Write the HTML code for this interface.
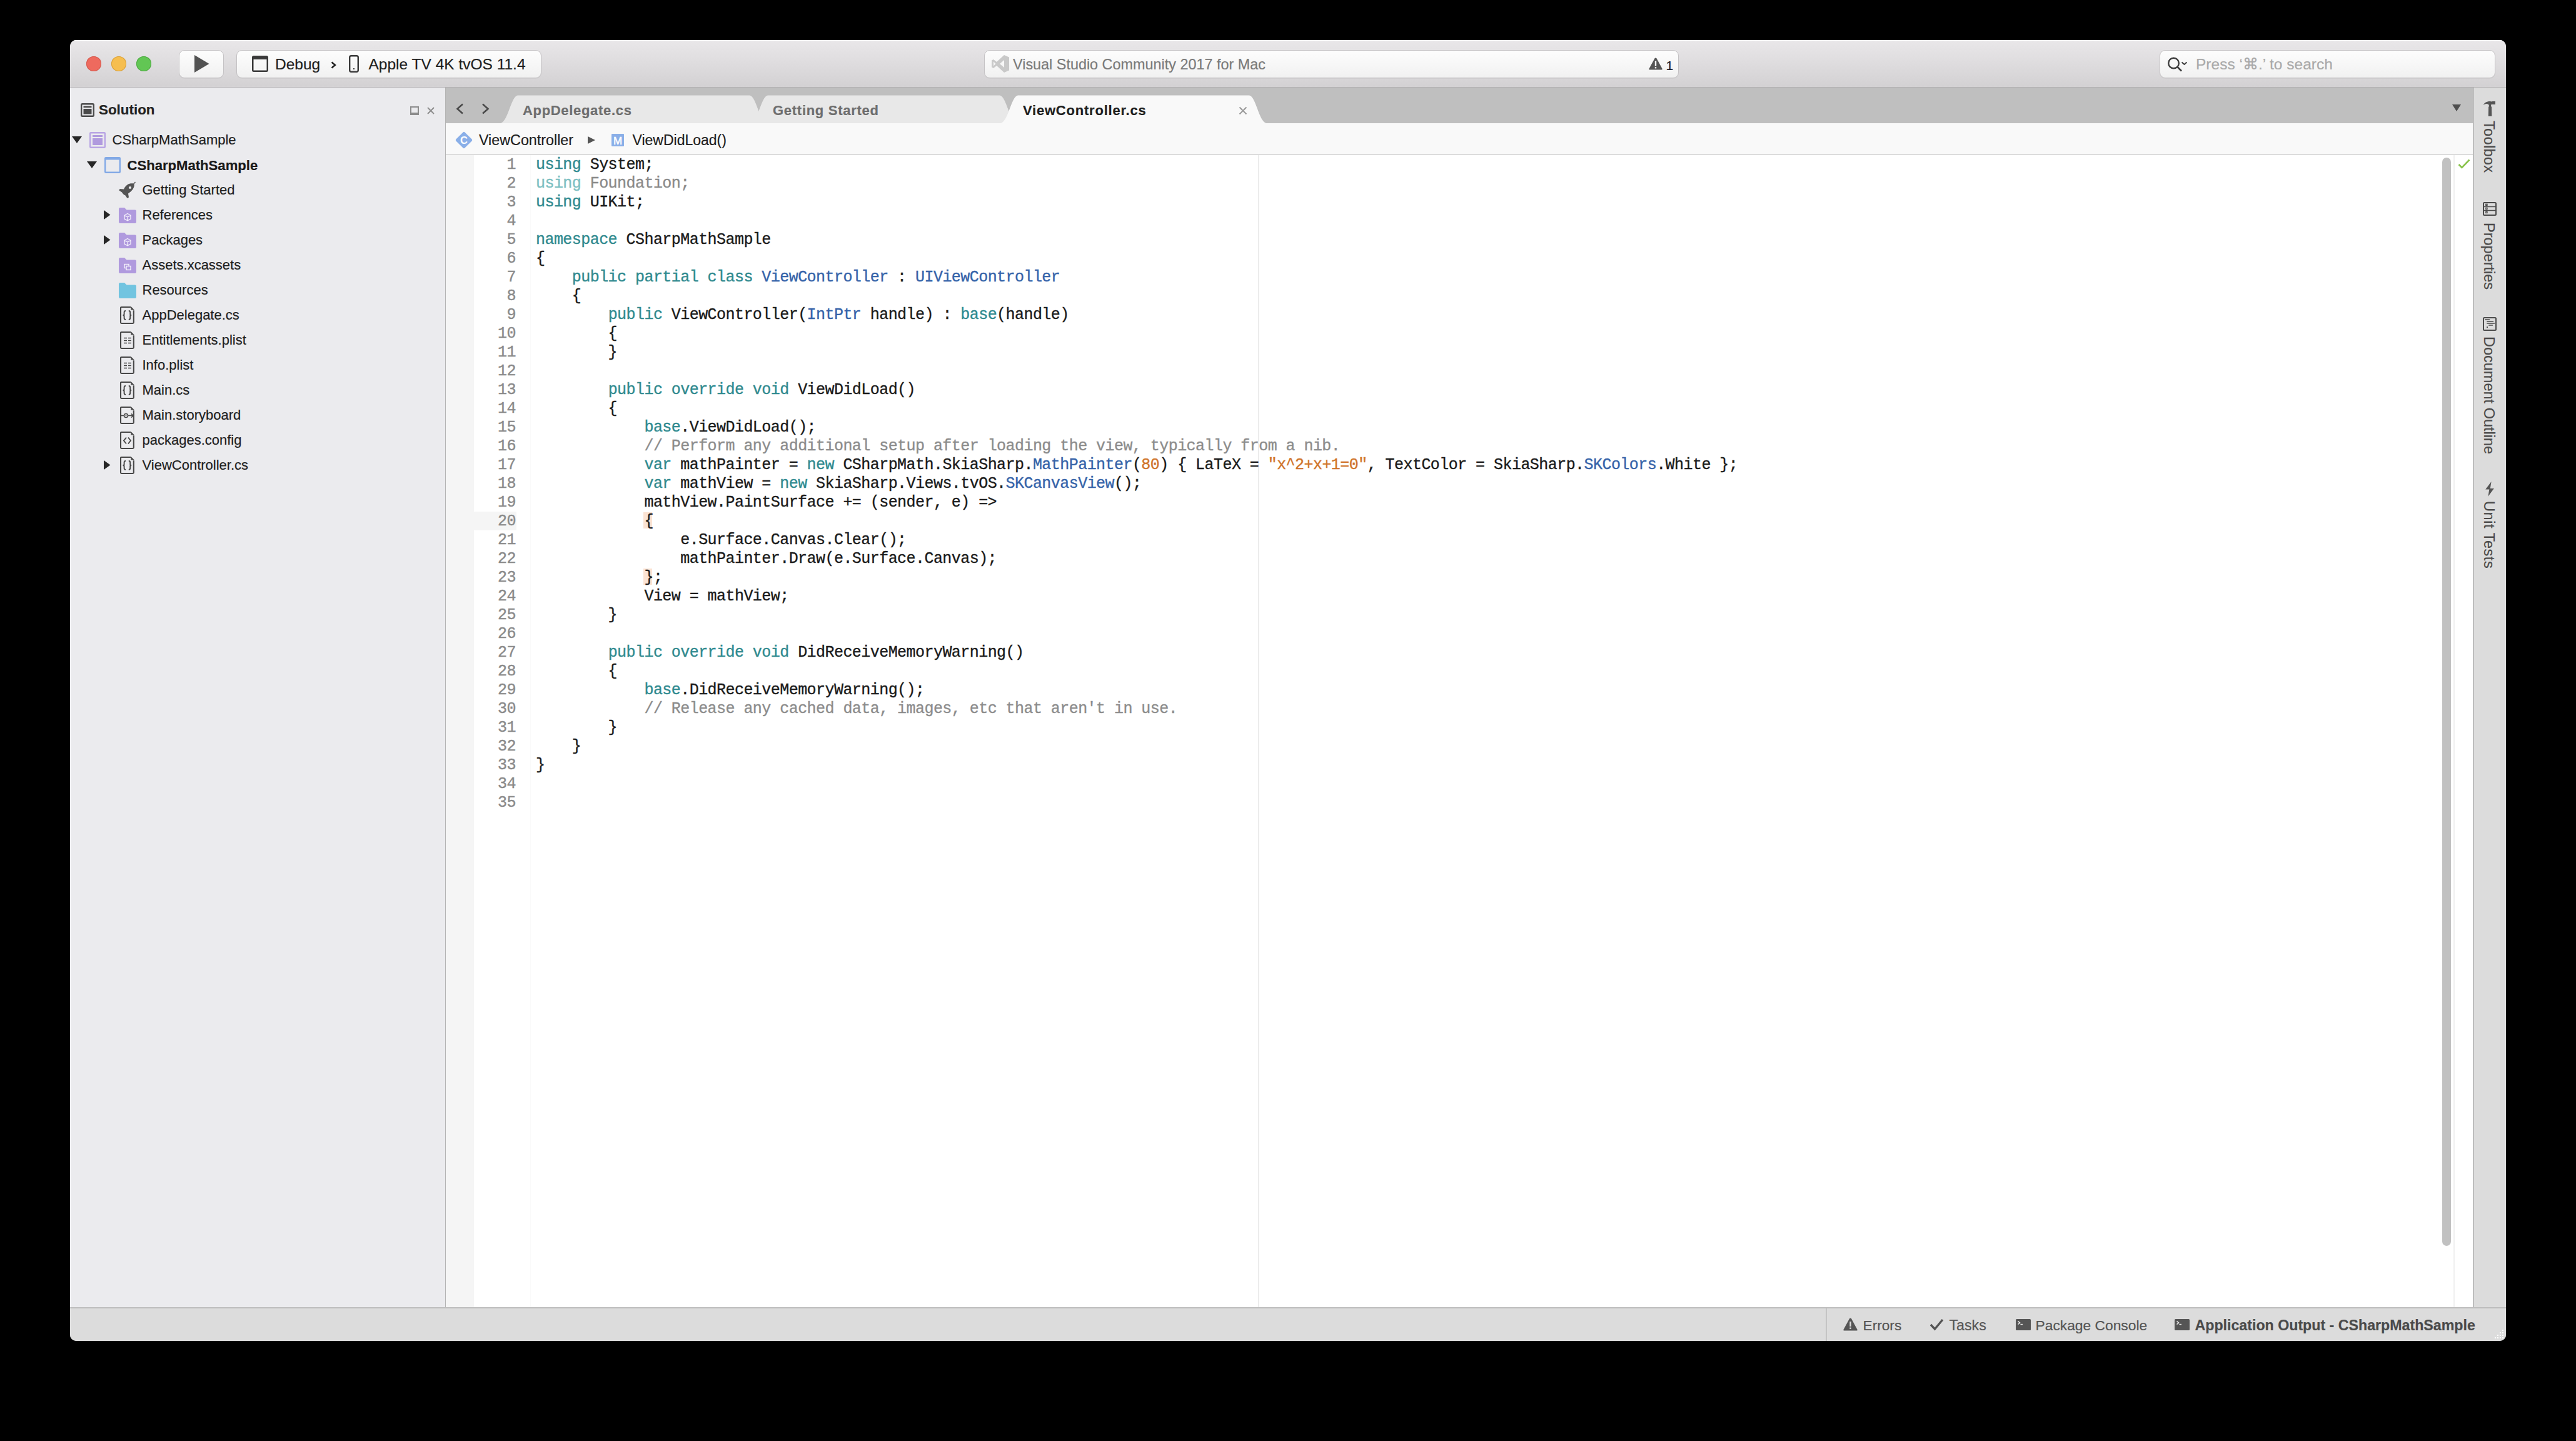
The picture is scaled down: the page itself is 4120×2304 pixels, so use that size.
<!DOCTYPE html>
<html><head><meta charset="utf-8">
<style>
html,body{margin:0;padding:0}
body{width:4120px;height:2304px;background:#000;position:relative;overflow:hidden;font-family:"Liberation Sans",sans-serif}
.a{position:absolute}
#win{position:absolute;left:112px;top:64px;width:3896px;height:2080px;border-radius:10px;overflow:hidden;background:#ececec}
#in{position:absolute;left:-112px;top:-64px;width:4120px;height:2304px}
#toolbar{left:112px;top:64px;width:3896px;height:75px;background:linear-gradient(#e9e7e9,#d3d1d3);border-bottom:1px solid #b1afb1;box-shadow:inset 0 1px 0 #f7f7f7}
.btn{background:linear-gradient(#fdfdfd,#f1f1f1);border:1.5px solid #c4c2c4;border-radius:9px;box-sizing:border-box;box-shadow:0 1px 0 rgba(0,0,0,0.04)}
.tl{width:24px;height:24px;border-radius:50%;box-sizing:border-box}
#side{left:112px;top:140px;width:600px;height:1950px;background:#ebebee}
#sideb{left:712px;top:140px;width:2px;height:1950px;background:#b4b4b4}
.row{position:absolute;font-size:22px;color:#1e1e1e;white-space:pre;line-height:26px}
#tabbar{left:713px;top:140px;width:3242px;height:57px;background:#bfbfbf}
#crumb{left:713px;top:197px;width:3242px;height:49px;background:#f9f9f9;border-bottom:2px solid #dcdcdc}
#gut{left:713px;top:248px;width:45px;height:1842px;background:#f5f5f5}
#code{left:758px;top:248px;width:3197px;height:1842px;background:#fff}
#rpanel{left:3955px;top:140px;width:53px;height:1950px;background:#dcdcdc;border-left:2px solid #bdbdbd;box-sizing:border-box}
#status{left:112px;top:2090px;width:3896px;height:54px;background:#dcdcdc;border-top:2px solid #bdbdbd;box-sizing:border-box}
.ln{position:absolute;left:758px;width:67px;text-align:right;font-family:"Liberation Mono",monospace;font-size:25px;letter-spacing:-0.6px;color:#8a8a8a;white-space:pre}
.cl{position:absolute;left:857px;font-family:"Liberation Mono",monospace;font-size:25px;letter-spacing:-0.6px;color:#1a1a1a;white-space:pre}
.lnum{z-index:2;-webkit-text-stroke:0.35px currentColor;width:67px;text-align:right;font-family:"Liberation Mono",monospace;font-size:25px;letter-spacing:-0.55px;line-height:30px;color:#8a8a8a;white-space:pre}
.code{z-index:2;-webkit-text-stroke:0.35px currentColor;font-family:"Liberation Mono",monospace;font-size:25px;letter-spacing:-0.55px;line-height:30px;color:#1a1a1a;white-space:pre}
.uk{color:#7cc0c2}.ug{color:#8a8a8a}.hl{}
.k{color:#2f8a8f}.t{color:#3563a9}.s{color:#d0742a}.c{color:#8c8c8c}
</style></head><body>
<div id="win"><div id="in">
<div id="toolbar" class="a"></div>
<div id="side" class="a"></div>
<div id="sideb" class="a"></div>
<div id="tabbar" class="a"></div>
<div id="crumb" class="a"></div>
<div id="gut" class="a"></div>
<div id="code" class="a"></div>
<div id="rpanel" class="a"></div>
<div id="status" class="a"></div>
<!--CODE-->
<div class="a lnum" style="left:758px;top:249.2px">1
2
3
4
5
6
7
8
9
10
11
12
13
14
15
16
17
18
19
20
21
22
23
24
25
26
27
28
29
30
31
32
33
34
35
</div>
<div class="a code" style="left:857px;top:249.2px"><span class="k">using</span> System;
<span class="uk">using</span><span class="ug"> Foundation;</span>
<span class="k">using</span> UIKit;

<span class="k">namespace</span> CSharpMathSample
{
    <span class="k">public partial class</span> <span class="t">ViewController</span> : <span class="t">UIViewController</span>
    {
        <span class="k">public</span> ViewController(<span class="t">IntPtr</span> handle) : <span class="k">base</span>(handle)
        {
        }

        <span class="k">public override void</span> ViewDidLoad()
        {
            <span class="k">base</span>.ViewDidLoad();
            <span class="c">// Perform any additional setup after loading the view, typically from a nib.</span>
            <span class="k">var</span> mathPainter = <span class="k">new</span> CSharpMath.SkiaSharp.<span class="t">MathPainter</span>(<span class="s">80</span>) { LaTeX = <span class="s">"x^2+x+1=0"</span>, TextColor = SkiaSharp.<span class="t">SKColors</span>.White };
            <span class="k">var</span> mathView = <span class="k">new</span> SkiaSharp.Views.tvOS.<span class="t">SKCanvasView</span>();
            mathView.PaintSurface += (sender, e) =&gt;
            <span class="hl">{</span>
                e.Surface.Canvas.Clear();
                mathPainter.Draw(e.Surface.Canvas);
            <span class="hl">}</span>;
            View = mathView;
        }

        <span class="k">public override void</span> DidReceiveMemoryWarning()
        {
            <span class="k">base</span>.DidReceiveMemoryWarning();
            <span class="c">// Release any cached data, images, etc that aren't in use.</span>
        }
    }
}


</div>
<!--/CODE-->
<!--CONTENT-->
<div class="a" style="left:138px;top:90px;width:24px;height:24px;border-radius:50%;background:#ee6a5e;box-shadow:inset 0 0 0 1px #d35a4f"></div>
<div class="a" style="left:178px;top:90px;width:24px;height:24px;border-radius:50%;background:#f6be4f;box-shadow:inset 0 0 0 1px #d9a13c"></div>
<div class="a" style="left:218px;top:90px;width:24px;height:24px;border-radius:50%;background:#62c654;box-shadow:inset 0 0 0 1px #4ea942"></div>
<div class="a btn" style="left:286px;top:80px;width:72px;height:45px"></div>
<svg class="a" style="left:311px;top:88px" width="24" height="28" viewBox="0 0 24 28"><path d="M0 0 L23.5 14 L0 28 Z" fill="#525252"/></svg>
<div class="a btn" style="left:378px;top:80px;width:488px;height:45px"></div>
<svg class="a" style="left:403px;top:89px" width="26" height="26" viewBox="0 0 26 26"><rect x="1.25" y="1.25" width="23.5" height="23.5" rx="1.5" fill="none" stroke="#3a3a3a" stroke-width="2.5"/><rect x="1" y="1" width="24" height="5" fill="#3a3a3a"/></svg>
<div class="a" style="left:440.0px;top:90.76px;font-size:24.50px;line-height:1;color:#1e1e1e;font-family:'Liberation Sans',sans-serif;white-space:pre;-webkit-text-stroke:0.2px currentColor;">Debug</div>
<svg class="a" style="left:529px;top:98px" width="9" height="12" viewBox="0 0 9 12"><path d="M1.5 1.5 L7 6 L1.5 10.5" fill="none" stroke="#1e1e1e" stroke-width="2.4"/></svg>
<svg class="a" style="left:558px;top:88px" width="16" height="28" viewBox="0 0 16 28"><rect x="1.2" y="1.2" width="13.6" height="25.6" rx="2.5" fill="none" stroke="#3a3a3a" stroke-width="2.4"/><rect x="7" y="21" width="2" height="2" fill="#3a3a3a"/></svg>
<div class="a" style="left:589.5px;top:90.76px;font-size:24.50px;line-height:1;color:#1e1e1e;font-family:'Liberation Sans',sans-serif;white-space:pre;-webkit-text-stroke:0.2px currentColor;">Apple TV 4K tvOS 11.4</div>
<div class="a btn" style="left:1574px;top:80px;width:1111px;height:45px"></div>
<svg class="a" style="left:1586px;top:88px" width="28" height="28" viewBox="0 0 28 28"><path d="M20 0 L28 3.5 L28 24.5 L20 28 L8 17 L3 21 L0 19.5 L0 8.5 L3 7 L8 11 Z M20 8 L13 14 L20 20 Z M3 10.5 L3 17.5 L6.5 14 Z" fill="#c9c9c9" fill-rule="evenodd"/></svg>
<div class="a" style="left:1620.0px;top:92.19px;font-size:23.40px;line-height:1;color:#7a7a7a;font-family:'Liberation Sans',sans-serif;white-space:pre;-webkit-text-stroke:0.2px currentColor;">Visual Studio Community 2017 for Mac</div>
<svg class="a" style="left:2637px;top:92px" width="22" height="20" viewBox="0 0 22 20"><path d="M11 0.5 Q12 0.5 12.6 1.5 L21.6 18 Q22 19.5 20.5 19.5 L1.5 19.5 Q0 19.5 0.4 18 L9.4 1.5 Q10 0.5 11 0.5 Z" fill="#555"/><rect x="9.8" y="5.5" width="2.4" height="8" fill="#fff"/><rect x="9.8" y="15" width="2.4" height="2.4" fill="#fff"/></svg>
<div class="a" style="left:2664.5px;top:94.22px;font-size:21.00px;line-height:1;color:#1a1a2a;font-family:'Liberation Sans',sans-serif;white-space:pre;-webkit-text-stroke:0.2px currentColor;">1</div>
<div class="a btn" style="left:3454px;top:80px;width:537px;height:45px"></div>
<svg class="a" style="left:3466px;top:91px" width="36" height="26" viewBox="0 0 36 26"><circle cx="10.5" cy="10" r="8.3" fill="none" stroke="#3c3c3c" stroke-width="2.4"/><path d="M16.5 16 L23 22.5" stroke="#3c3c3c" stroke-width="2.6"/><path d="M23.5 8.5 L27.5 12 L31.5 8.5" fill="none" stroke="#3c3c3c" stroke-width="2"/></svg>
<div class="a" style="left:3512.0px;top:91.26px;font-size:24.50px;line-height:1;color:#a9a9a9;font-family:'Liberation Sans',sans-serif;white-space:pre;-webkit-text-stroke:0.2px currentColor;">Press ‘⌘.’ to search</div>
<svg class="a" style="left:129px;top:165px" width="22" height="22" viewBox="0 0 22 22"><rect x="1.2" y="1.2" width="19.6" height="19.6" rx="1.5" fill="none" stroke="#4a4a4a" stroke-width="2.4"/><rect x="4.5" y="4.5" width="13" height="2.6" fill="#4a4a4a"/><rect x="4.5" y="9" width="13" height="8.5" fill="#4a4a4a"/></svg>
<div class="a" style="left:158.0px;top:165.24px;font-size:22.40px;line-height:1;color:#222;font-weight:bold;font-family:'Liberation Sans',sans-serif;white-space:pre;-webkit-text-stroke:0.2px currentColor;">Solution</div>
<svg class="a" style="left:656px;top:170px" width="14" height="14" viewBox="0 0 14 14"><rect x="1" y="1" width="12" height="12" fill="none" stroke="#8c8c8c" stroke-width="2"/><rect x="1" y="10" width="12" height="3" fill="#8c8c8c"/></svg>
<svg class="a" style="left:683px;top:171px" width="12" height="12" viewBox="0 0 12 12"><path d="M1 1 L11 11 M11 1 L1 11" stroke="#8c8c8c" stroke-width="1.8"/></svg>
<svg class="a" style="left:115px;top:218px" width="16" height="12" viewBox="0 0 16 12"><path d="M0 0 L16 0 L8 11 Z" fill="#262626"/></svg>
<svg class="a" style="left:143px;top:211px" width="26" height="26" viewBox="0 0 26 26"><rect x="1.2" y="1.2" width="23.6" height="23.6" rx="1" fill="none" stroke="#b9a5e4" stroke-width="2.4"/><rect x="5" y="5" width="16" height="3" fill="#b09ade"/><rect x="5" y="10" width="16" height="11" fill="#b09ade"/></svg>
<div class="a" style="left:179.5px;top:213.38px;font-size:22.00px;line-height:1;color:#1e1e1e;font-family:'Liberation Sans',sans-serif;white-space:pre;-webkit-text-stroke:0.2px currentColor;">CSharpMathSample</div>
<svg class="a" style="left:139px;top:258px" width="16" height="12" viewBox="0 0 16 12"><path d="M0 0 L16 0 L8 11 Z" fill="#262626"/></svg>
<svg class="a" style="left:167px;top:251px" width="26" height="26" viewBox="0 0 26 26"><rect x="1.2" y="1.2" width="23.6" height="23.6" rx="1" fill="none" stroke="#82a9e6" stroke-width="2.4"/><rect x="1" y="1" width="24" height="3.5" fill="#82a9e6"/></svg>
<div class="a" style="left:203.5px;top:253.79px;font-size:22.10px;line-height:1;color:#1a1a1a;font-weight:bold;font-family:'Liberation Sans',sans-serif;white-space:pre;-webkit-text-stroke:0.2px currentColor;">CSharpMathSample</div>
<svg class="a" style="left:185px;top:285px" width="36" height="36" viewBox="0 0 36 36"><path d="M10 22.5 L5.5 19.5 L6.5 17 L13 17.5 C15 13 19 9 24 8.3 C26 8 28 8.2 29.3 8.6 C30.2 11 29.6 14.5 27.5 17.5 C25.5 20.5 22.5 22.5 20 24.5 L21 30.5 L18.5 32 L15.5 27.5 C13.5 27 11.5 25 10 22.5 Z" fill="#555"/><path d="M28.8 9 L31.5 6" stroke="#555" stroke-width="1.3"/><circle cx="23" cy="15" r="2.1" fill="#ebebee"/></svg>
<div class="a" style="left:227.5px;top:293.38px;font-size:22.00px;line-height:1;color:#1e1e1e;font-family:'Liberation Sans',sans-serif;white-space:pre;-webkit-text-stroke:0.2px currentColor;">Getting Started</div>
<svg class="a" style="left:166px;top:336px" width="11" height="15" viewBox="0 0 11 15"><path d="M0 0 L10.5 7.5 L0 15 Z" fill="#262626"/></svg>
<svg class="a" style="left:190px;top:332px" width="28" height="25" viewBox="0 0 28 25"><path d="M0 2 Q0 0 2 0 L9 0 L12.5 3.5 L26 3.5 Q28 3.5 28 5.5 L28 23 Q28 25 26 25 L2 25 Q0 25 0 23 Z" fill="#b09ade"/><path d="M14 9.5 L19 12.3 L19 18 L14 20.8 L9 18 L9 12.3 Z M9 12.3 L14 15.1 L19 12.3 M14 15.1 L14 20.8" fill="none" stroke="#f4f0fb" stroke-width="1.3"/></svg>
<div class="a" style="left:227.5px;top:333.38px;font-size:22.00px;line-height:1;color:#1e1e1e;font-family:'Liberation Sans',sans-serif;white-space:pre;-webkit-text-stroke:0.2px currentColor;">References</div>
<svg class="a" style="left:166px;top:376px" width="11" height="15" viewBox="0 0 11 15"><path d="M0 0 L10.5 7.5 L0 15 Z" fill="#262626"/></svg>
<svg class="a" style="left:190px;top:372px" width="28" height="25" viewBox="0 0 28 25"><path d="M0 2 Q0 0 2 0 L9 0 L12.5 3.5 L26 3.5 Q28 3.5 28 5.5 L28 23 Q28 25 26 25 L2 25 Q0 25 0 23 Z" fill="#b09ade"/><path d="M14 9.5 L19 12.3 L19 18 L14 20.8 L9 18 L9 12.3 Z M9 12.3 L14 15.1 L19 12.3 M14 15.1 L14 20.8" fill="none" stroke="#f4f0fb" stroke-width="1.3"/></svg>
<div class="a" style="left:227.5px;top:373.38px;font-size:22.00px;line-height:1;color:#1e1e1e;font-family:'Liberation Sans',sans-serif;white-space:pre;-webkit-text-stroke:0.2px currentColor;">Packages</div>
<svg class="a" style="left:190px;top:412px" width="28" height="25" viewBox="0 0 28 25"><path d="M0 2 Q0 0 2 0 L9 0 L12.5 3.5 L26 3.5 Q28 3.5 28 5.5 L28 23 Q28 25 26 25 L2 25 Q0 25 0 23 Z" fill="#b09ade"/><rect x="9" y="10.5" width="7" height="6" fill="none" stroke="#f4f0fb" stroke-width="1.4"/><rect x="12" y="13.5" width="7" height="6" fill="#b09ade" stroke="#f4f0fb" stroke-width="1.4"/></svg>
<div class="a" style="left:227.5px;top:413.38px;font-size:22.00px;line-height:1;color:#1e1e1e;font-family:'Liberation Sans',sans-serif;white-space:pre;-webkit-text-stroke:0.2px currentColor;">Assets.xcassets</div>
<svg class="a" style="left:190px;top:452px" width="28" height="25" viewBox="0 0 28 25"><path d="M0 2 Q0 0 2 0 L9 0 L12.5 3.5 L26 3.5 Q28 3.5 28 5.5 L28 23 Q28 25 26 25 L2 25 Q0 25 0 23 Z" fill="#71c4e0"/></svg>
<div class="a" style="left:227.5px;top:453.38px;font-size:22.00px;line-height:1;color:#1e1e1e;font-family:'Liberation Sans',sans-serif;white-space:pre;-webkit-text-stroke:0.2px currentColor;">Resources</div>
<svg class="a" style="left:190.5px;top:489px" width="26" height="30" viewBox="0 0 26 30"><path d="M18.2 2 L3.4 2 Q2 2 2 3.4 L2 26.6 Q2 28 3.4 28 L21.4 28 Q22.8 28 22.8 26.6 L22.8 7.2" fill="none" stroke="#474747" stroke-width="2.1"/><path d="M18.4 1 L24 6.6 L18.4 6.6 Z" fill="#474747"/><path d="M10 8 Q7.6 8 7.6 10.4 L7.6 13.6 Q7.6 15 5.6 15 Q7.6 15 7.6 16.4 L7.6 19.6 Q7.6 22 10 22 M14.8 8 Q17.2 8 17.2 10.4 L17.2 13.6 Q17.2 15 19.2 15 Q17.2 15 17.2 16.4 L17.2 19.6 Q17.2 22 14.8 22" fill="none" stroke="#474747" stroke-width="1.9"/></svg>
<div class="a" style="left:227.5px;top:493.38px;font-size:22.00px;line-height:1;color:#1e1e1e;font-family:'Liberation Sans',sans-serif;white-space:pre;-webkit-text-stroke:0.2px currentColor;">AppDelegate.cs</div>
<svg class="a" style="left:190.5px;top:529px" width="26" height="30" viewBox="0 0 26 30"><path d="M18.2 2 L3.4 2 Q2 2 2 3.4 L2 26.6 Q2 28 3.4 28 L21.4 28 Q22.8 28 22.8 26.6 L22.8 7.2" fill="none" stroke="#474747" stroke-width="2.1"/><path d="M18.4 1 L24 6.6 L18.4 6.6 Z" fill="#474747"/><path d="M7 11.5 L12 11.5 M14 11.5 L19 11.5 M7 15.5 L12 15.5 M14 15.5 L19 15.5 M7 19.5 L12 19.5 M14 19.5 L19 19.5" stroke="#474747" stroke-width="1.7"/></svg>
<div class="a" style="left:227.5px;top:533.38px;font-size:22.00px;line-height:1;color:#1e1e1e;font-family:'Liberation Sans',sans-serif;white-space:pre;-webkit-text-stroke:0.2px currentColor;">Entitlements.plist</div>
<svg class="a" style="left:190.5px;top:569px" width="26" height="30" viewBox="0 0 26 30"><path d="M18.2 2 L3.4 2 Q2 2 2 3.4 L2 26.6 Q2 28 3.4 28 L21.4 28 Q22.8 28 22.8 26.6 L22.8 7.2" fill="none" stroke="#474747" stroke-width="2.1"/><path d="M18.4 1 L24 6.6 L18.4 6.6 Z" fill="#474747"/><path d="M7 11.5 L12 11.5 M14 11.5 L19 11.5 M7 15.5 L12 15.5 M14 15.5 L19 15.5 M7 19.5 L12 19.5 M14 19.5 L19 19.5" stroke="#474747" stroke-width="1.7"/></svg>
<div class="a" style="left:227.5px;top:573.38px;font-size:22.00px;line-height:1;color:#1e1e1e;font-family:'Liberation Sans',sans-serif;white-space:pre;-webkit-text-stroke:0.2px currentColor;">Info.plist</div>
<svg class="a" style="left:190.5px;top:609px" width="26" height="30" viewBox="0 0 26 30"><path d="M18.2 2 L3.4 2 Q2 2 2 3.4 L2 26.6 Q2 28 3.4 28 L21.4 28 Q22.8 28 22.8 26.6 L22.8 7.2" fill="none" stroke="#474747" stroke-width="2.1"/><path d="M18.4 1 L24 6.6 L18.4 6.6 Z" fill="#474747"/><path d="M10 8 Q7.6 8 7.6 10.4 L7.6 13.6 Q7.6 15 5.6 15 Q7.6 15 7.6 16.4 L7.6 19.6 Q7.6 22 10 22 M14.8 8 Q17.2 8 17.2 10.4 L17.2 13.6 Q17.2 15 19.2 15 Q17.2 15 17.2 16.4 L17.2 19.6 Q17.2 22 14.8 22" fill="none" stroke="#474747" stroke-width="1.9"/></svg>
<div class="a" style="left:227.5px;top:613.38px;font-size:22.00px;line-height:1;color:#1e1e1e;font-family:'Liberation Sans',sans-serif;white-space:pre;-webkit-text-stroke:0.2px currentColor;">Main.cs</div>
<svg class="a" style="left:190.5px;top:649px" width="26" height="30" viewBox="0 0 26 30"><path d="M18.2 2 L3.4 2 Q2 2 2 3.4 L2 26.6 Q2 28 3.4 28 L21.4 28 Q22.8 28 22.8 26.6 L22.8 7.2" fill="none" stroke="#474747" stroke-width="2.1"/><path d="M18.4 1 L24 6.6 L18.4 6.6 Z" fill="#474747"/><path d="M2 15.5 L7 15.5 M14 15.5 L22 15.5 M19 12.5 L22 15.5 L19 18.5" fill="none" stroke="#474747" stroke-width="1.6"/><circle cx="10.5" cy="15.5" r="3" fill="none" stroke="#474747" stroke-width="1.6"/><circle cx="10.5" cy="15.5" r="0.9" fill="#474747"/></svg>
<div class="a" style="left:227.5px;top:653.38px;font-size:22.00px;line-height:1;color:#1e1e1e;font-family:'Liberation Sans',sans-serif;white-space:pre;-webkit-text-stroke:0.2px currentColor;">Main.storyboard</div>
<svg class="a" style="left:190.5px;top:689px" width="26" height="30" viewBox="0 0 26 30"><path d="M18.2 2 L3.4 2 Q2 2 2 3.4 L2 26.6 Q2 28 3.4 28 L21.4 28 Q22.8 28 22.8 26.6 L22.8 7.2" fill="none" stroke="#474747" stroke-width="2.1"/><path d="M18.4 1 L24 6.6 L18.4 6.6 Z" fill="#474747"/><path d="M11 10.5 L7 15.5 L11 20.5 M14 10.5 L18 15.5 L14 20.5" fill="none" stroke="#474747" stroke-width="1.9"/></svg>
<div class="a" style="left:227.5px;top:693.38px;font-size:22.00px;line-height:1;color:#1e1e1e;font-family:'Liberation Sans',sans-serif;white-space:pre;-webkit-text-stroke:0.2px currentColor;">packages.config</div>
<svg class="a" style="left:166px;top:736px" width="11" height="15" viewBox="0 0 11 15"><path d="M0 0 L10.5 7.5 L0 15 Z" fill="#262626"/></svg>
<svg class="a" style="left:190.5px;top:729px" width="26" height="30" viewBox="0 0 26 30"><path d="M18.2 2 L3.4 2 Q2 2 2 3.4 L2 26.6 Q2 28 3.4 28 L21.4 28 Q22.8 28 22.8 26.6 L22.8 7.2" fill="none" stroke="#474747" stroke-width="2.1"/><path d="M18.4 1 L24 6.6 L18.4 6.6 Z" fill="#474747"/><path d="M10 8 Q7.6 8 7.6 10.4 L7.6 13.6 Q7.6 15 5.6 15 Q7.6 15 7.6 16.4 L7.6 19.6 Q7.6 22 10 22 M14.8 8 Q17.2 8 17.2 10.4 L17.2 13.6 Q17.2 15 19.2 15 Q17.2 15 17.2 16.4 L17.2 19.6 Q17.2 22 14.8 22" fill="none" stroke="#474747" stroke-width="1.9"/></svg>
<div class="a" style="left:227.5px;top:733.38px;font-size:22.00px;line-height:1;color:#1e1e1e;font-family:'Liberation Sans',sans-serif;white-space:pre;-webkit-text-stroke:0.2px currentColor;">ViewController.cs</div>
<svg class="a" style="left:0;top:0" width="4120" height="260"><path d="M801 197 C813 193 817 154.5 828 152.5 L1199 152.5 C1210 154.5 1214 193 1226 197 Z" fill="#e8e8e8" stroke="none" stroke-width="1"/><path d="M1201 197 C1213 193 1217 154.5 1228 152.5 L1599 152.5 C1610 154.5 1614 193 1626 197 Z" fill="#e8e8e8" stroke="none" stroke-width="1"/><path d="M1601 197 C1613 193 1617 154.5 1628 152.5 L1998 152.5 C2009 154.5 2013 193 2025 197 Z" fill="#f9f9f9" stroke="none" stroke-width="1"/></svg>
<svg class="a" style="left:729px;top:165px" width="13" height="18" viewBox="0 0 13 18"><path d="M11 1.5 L2.5 9 L11 16.5" fill="none" stroke="#4a4a4a" stroke-width="2.6"/></svg>
<svg class="a" style="left:770px;top:165px" width="13" height="18" viewBox="0 0 13 18"><path d="M2 1.5 L10.5 9 L2 16.5" fill="none" stroke="#4a4a4a" stroke-width="2.6"/></svg>
<div class="a" style="left:836.0px;top:166.38px;font-size:22.00px;line-height:1;color:#6e6e6e;font-weight:bold;font-family:'Liberation Sans',sans-serif;white-space:pre;-webkit-text-stroke:0.2px currentColor;letter-spacing:0.68px">AppDelegate.cs</div>
<div class="a" style="left:1236.0px;top:166.38px;font-size:22.00px;line-height:1;color:#6e6e6e;font-weight:bold;font-family:'Liberation Sans',sans-serif;white-space:pre;-webkit-text-stroke:0.2px currentColor;letter-spacing:0.72px">Getting Started</div>
<div class="a" style="left:1636.0px;top:166.38px;font-size:22.00px;line-height:1;color:#1e1e1e;font-weight:bold;font-family:'Liberation Sans',sans-serif;white-space:pre;-webkit-text-stroke:0.2px currentColor;letter-spacing:0.78px">ViewController.cs</div>
<svg class="a" style="left:1981px;top:170px" width="14" height="14" viewBox="0 0 14 14"><path d="M1.5 1.5 L12.5 12.5 M12.5 1.5 L1.5 12.5" stroke="#9a9a9a" stroke-width="2"/></svg>
<svg class="a" style="left:3922px;top:167px" width="14" height="12" viewBox="0 0 14 12"><path d="M0 0 L14 0 L7 11 Z" fill="#4e4e4e"/></svg>
<svg class="a" style="left:728px;top:210px" width="28" height="28" viewBox="0 0 28 28"><path d="M12.6 1.4 Q14 0 15.4 1.4 L26.6 12.6 Q28 14 26.6 15.4 L15.4 26.6 Q14 28 12.6 26.6 L1.4 15.4 Q0 14 1.4 12.6 Z" fill="#8aafe8"/><text x="14" y="20" font-family="Liberation Sans" font-weight="bold" font-size="16.5" text-anchor="middle" fill="#fff">C</text></svg>
<div class="a" style="left:766.0px;top:212.88px;font-size:23.30px;line-height:1;color:#1e1e1e;font-family:'Liberation Sans',sans-serif;white-space:pre;-webkit-text-stroke:0.2px currentColor;">ViewController</div>
<svg class="a" style="left:940px;top:218px" width="12" height="12" viewBox="0 0 12 12"><path d="M0 0 L12 6 L0 12 Z" fill="#555"/></svg>
<svg class="a" style="left:978px;top:214px" width="20" height="20" viewBox="0 0 20 20"><rect width="20" height="20" rx="1" fill="#8aafe8"/><text x="10" y="16.8" font-family="Liberation Sans" font-size="17" text-anchor="middle" fill="#fff" stroke="#fff" stroke-width="0.5">M</text></svg>
<div class="a" style="left:1011.5px;top:213.13px;font-size:23.00px;line-height:1;color:#1e1e1e;font-family:'Liberation Sans',sans-serif;white-space:pre;-webkit-text-stroke:0.2px currentColor;">ViewDidLoad()</div>
<div class="a" style="left:758px;top:818px;width:68px;height:30px;background:#f5f5f5"></div>
<div class="a" style="left:1029px;top:819px;width:13.5px;height:25.5px;background:#fbe3d3"></div>
<div class="a" style="left:1029px;top:909px;width:13.5px;height:25.5px;background:#fbe3d3"></div>
<div class="a" style="left:848px;top:248px;width:1px;height:1842px;background:#fafafa"></div>
<div class="a" style="left:2012px;top:248px;width:2px;height:1842px;background:#ececec"></div>
<div class="a" style="left:3924px;top:248px;width:2px;height:1842px;background:#f0f0f0"></div>
<div class="a" style="left:3906px;top:252px;width:14px;height:1740px;border-radius:7px;background:#c1c1c1"></div>
<svg class="a" style="left:3931px;top:254px" width="20" height="16" viewBox="0 0 20 16"><path d="M1.5 9 L6.5 14 L18.5 1.5" fill="none" stroke="#88c24a" stroke-width="2.6"/></svg>
<svg class="a" style="left:3970px;top:160px" width="24" height="28" viewBox="0 0 24 28"><path d="M1.8 7.7 C4 3.5 8.5 2 12.5 2 L15.6 2.5 L16.4 2 L21 2 L21 7 L16.4 7 L15.6 6.4 L14.3 7.4 Q13.9 9 14.2 10.6 L15 10.6 L15.3 25.8 L9.8 25.8 L10.1 10.6 L10.9 10.6 Q11.1 8.6 10.3 7.2 Q6.5 4.6 1.8 7.7 Z" fill="#555"/></svg>
<div class="a" style="left:3991.5px;top:193px;font-size:23.5px;line-height:1;color:#4a4a4a;white-space:pre;letter-spacing:0.33px;-webkit-text-stroke:0.15px currentColor;transform-origin:0 0;transform:rotate(90deg)">Toolbox</div>
<svg class="a" style="left:3970px;top:322px" width="24" height="24" viewBox="0 0 24 24"><rect x="2" y="2" width="20" height="20" rx="1.5" fill="none" stroke="#4a4a4a" stroke-width="2"/><path d="M2 8.4 L22 8.4 M2 14.4 L22 14.4" stroke="#4a4a4a" stroke-width="1.5"/><rect x="5.8" y="4.3" width="2.2" height="2.2" fill="none" stroke="#4a4a4a" stroke-width="1.3"/><rect x="5.8" y="10.3" width="2.2" height="2.2" fill="none" stroke="#4a4a4a" stroke-width="1.3"/><rect x="5.8" y="16.3" width="2.2" height="2.2" fill="none" stroke="#4a4a4a" stroke-width="1.3"/></svg>
<div class="a" style="left:3991.5px;top:356px;font-size:23.5px;line-height:1;color:#4a4a4a;white-space:pre;letter-spacing:0px;-webkit-text-stroke:0.15px currentColor;transform-origin:0 0;transform:rotate(90deg)">Properties</div>
<svg class="a" style="left:3970px;top:506px" width="24" height="24" viewBox="0 0 24 24"><rect x="2" y="2" width="20" height="20" rx="1.5" fill="none" stroke="#4a4a4a" stroke-width="2"/><path d="M4.8 5 L11.5 5 M7.8 8 L17.5 8 M7.8 11 L19.5 11 M10.8 14 L16.5 14" stroke="#4a4a4a" stroke-width="1.6" stroke-linecap="round"/><rect x="7" y="16.2" width="2" height="2" fill="#4a4a4a"/></svg>
<div class="a" style="left:3991.5px;top:538px;font-size:23.5px;line-height:1;color:#4a4a4a;white-space:pre;letter-spacing:0px;-webkit-text-stroke:0.15px currentColor;transform-origin:0 0;transform:rotate(90deg)">Document Outline</div>
<svg class="a" style="left:3970px;top:766px" width="24" height="30" viewBox="0 0 24 30"><path d="M14.6 4 L5.2 16.6 L11.3 16.6 L9.4 27.7 L18.9 15 L12.8 15 Z" fill="#555"/></svg>
<div class="a" style="left:3991.5px;top:801px;font-size:23.5px;line-height:1;color:#4a4a4a;white-space:pre;letter-spacing:0.55px;-webkit-text-stroke:0.15px currentColor;transform-origin:0 0;transform:rotate(90deg)">Unit Tests</div>
<div class="a" style="left:2920px;top:2092px;width:2px;height:52px;background:#c4c4c4"></div>
<svg class="a" style="left:2948px;top:2107px" width="23" height="21" viewBox="0 0 23 21"><path d="M11.5 0.5 Q12.5 0.5 13.1 1.5 L22.6 19 Q23 20.5 21.5 20.5 L1.5 20.5 Q0 20.5 0.4 19 L9.9 1.5 Q10.5 0.5 11.5 0.5 Z" fill="#555"/><rect x="10.3" y="6" width="2.4" height="8" fill="#dcdcdc"/><rect x="10.3" y="15.5" width="2.4" height="2.4" fill="#dcdcdc"/></svg>
<div class="a" style="left:2979.5px;top:2107.98px;font-size:22.70px;line-height:1;color:#555;font-family:'Liberation Sans',sans-serif;white-space:pre;-webkit-text-stroke:0.2px currentColor;">Errors</div>
<svg class="a" style="left:3086px;top:2108px" width="23" height="20" viewBox="0 0 23 20"><path d="M2 10 L8.5 17 L21 2" fill="none" stroke="#555" stroke-width="3.4"/></svg>
<div class="a" style="left:3117.5px;top:2107.56px;font-size:23.20px;line-height:1;color:#555;font-family:'Liberation Sans',sans-serif;white-space:pre;-webkit-text-stroke:0.2px currentColor;">Tasks</div>
<svg class="a" style="left:3224px;top:2109px" width="24" height="18" viewBox="0 0 24 18"><rect width="24" height="18" rx="1.5" fill="#555"/><path d="M3.5 3.5 L6.5 6 L3.5 8.5" fill="none" stroke="#eee" stroke-width="1.6"/><path d="M7.5 8.5 L11 8.5" stroke="#eee" stroke-width="1.4"/></svg>
<div class="a" style="left:3255.5px;top:2107.90px;font-size:22.80px;line-height:1;color:#555;font-family:'Liberation Sans',sans-serif;white-space:pre;-webkit-text-stroke:0.2px currentColor;">Package Console</div>
<svg class="a" style="left:3478px;top:2109px" width="24" height="18" viewBox="0 0 24 18"><rect width="24" height="18" rx="1.5" fill="#555"/><path d="M3.5 3.5 L6.5 6 L3.5 8.5" fill="none" stroke="#eee" stroke-width="1.6"/><path d="M7.5 8.5 L11 8.5" stroke="#eee" stroke-width="1.4"/></svg>
<div class="a" style="left:3510.5px;top:2107.56px;font-size:23.20px;line-height:1;color:#4a4a4a;font-weight:bold;font-family:'Liberation Sans',sans-serif;white-space:pre;-webkit-text-stroke:0.2px currentColor;">Application Output - CSharpMathSample</div>
<svg class="a" style="left:3986px;top:2122px" width="20" height="20" viewBox="0 0 20 20"><rect x="16" y="4" width="2" height="2" fill="#fff"/><rect x="12" y="8" width="2" height="2" fill="#fff"/><rect x="16" y="8" width="2" height="2" fill="#fff"/><rect x="8" y="12" width="2" height="2" fill="#fff"/><rect x="12" y="12" width="2" height="2" fill="#fff"/><rect x="16" y="12" width="2" height="2" fill="#fff"/><rect x="4" y="16" width="2" height="2" fill="#fff"/><rect x="8" y="16" width="2" height="2" fill="#fff"/><rect x="12" y="16" width="2" height="2" fill="#fff"/><rect x="16" y="16" width="2" height="2" fill="#fff"/></svg>
<!--/CONTENT-->
</div></div>
</body></html>
